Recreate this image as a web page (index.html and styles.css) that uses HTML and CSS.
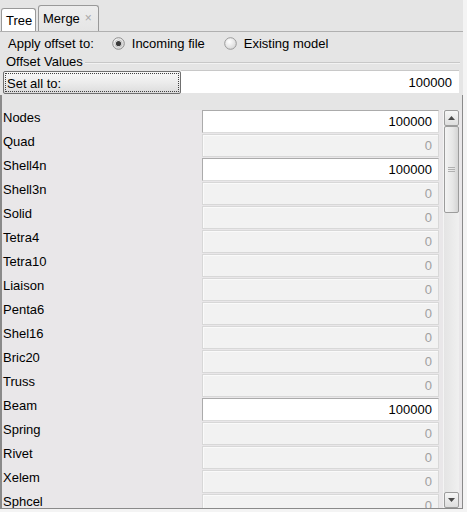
FILE: index.html
```html
<!DOCTYPE html>
<html>
<head>
<meta charset="utf-8">
<link rel="stylesheet" href="styles.css">
</head>
<body>
<div class="widget">
  <div class="tabs">
    <div class="tab tab-tree">Tree</div>
    <div class="tab tab-merge">Merge<span class="close">×</span></div>
  </div>
  <div class="panel">
    <div class="apply">
      <span class="apply-label">Apply offset to:</span>
      <span class="radio">
        <svg class="radio-icon" width="13" height="13" viewBox="0 0 13 13">
          <defs>
            <radialGradient id="rg1" cx="0.4" cy="0.35" r="0.7">
              <stop offset="0" stop-color="#ffffff"/>
              <stop offset="1" stop-color="#d6d6d6"/>
            </radialGradient>
          </defs>
          <circle cx="6.5" cy="6.5" r="5.8" fill="url(#rg1)" stroke="#8e8e8e" stroke-width="1"/>
          <circle cx="6.5" cy="6.5" r="2.6" fill="#3a3a3a"/>
          <circle cx="6.5" cy="6.5" r="3.6" fill="none" stroke="#b8b8b8" stroke-width="0.8"/>
        </svg>
        Incoming file
      </span>
      <span class="radio">
        <svg class="radio-icon" width="13" height="13" viewBox="0 0 13 13">
          <defs>
            <radialGradient id="rg2" cx="0.4" cy="0.35" r="0.7">
              <stop offset="0" stop-color="#ffffff"/>
              <stop offset="1" stop-color="#d6d6d6"/>
            </radialGradient>
          </defs>
          <circle cx="6.5" cy="6.5" r="5.8" fill="url(#rg2)" stroke="#9a9a9a" stroke-width="1"/>
        </svg>
        Existing model
      </span>
    </div>
    <div class="group-title"><span class="group-text">Offset Values</span><span class="group-line"></span></div>
    <div class="setall">
      <div class="btn"><span class="btn-inner">Set all to:</span></div>
      <div class="field">100000</div>
    </div>
    <div class="scroll">
      <div class="scroll-head"></div>
      <div class="scroll-body">
        <div class="rows">
          <div class="row"><span class="lbl">Nodes</span><span class="inp on">100000</span></div>
          <div class="row"><span class="lbl">Quad</span><span class="inp off">0</span></div>
          <div class="row"><span class="lbl">Shell4n</span><span class="inp on">100000</span></div>
          <div class="row"><span class="lbl">Shell3n</span><span class="inp off">0</span></div>
          <div class="row"><span class="lbl">Solid</span><span class="inp off">0</span></div>
          <div class="row"><span class="lbl">Tetra4</span><span class="inp off">0</span></div>
          <div class="row"><span class="lbl">Tetra10</span><span class="inp off">0</span></div>
          <div class="row"><span class="lbl">Liaison</span><span class="inp off">0</span></div>
          <div class="row"><span class="lbl">Penta6</span><span class="inp off">0</span></div>
          <div class="row"><span class="lbl">Shel16</span><span class="inp off">0</span></div>
          <div class="row"><span class="lbl">Bric20</span><span class="inp off">0</span></div>
          <div class="row"><span class="lbl">Truss</span><span class="inp off">0</span></div>
          <div class="row"><span class="lbl">Beam</span><span class="inp on">100000</span></div>
          <div class="row"><span class="lbl">Spring</span><span class="inp off">0</span></div>
          <div class="row"><span class="lbl">Rivet</span><span class="inp off">0</span></div>
          <div class="row"><span class="lbl">Xelem</span><span class="inp off">0</span></div>
          <div class="row"><span class="lbl">Sphcel</span><span class="inp off">0</span></div>
        </div>
        <div class="scrollbar">
          <div class="sb-btn">
            <svg width="7" height="4" viewBox="0 0 7 4"><path d="M0 4 L3.5 0 L7 4 Z" fill="#4a4a4a"/></svg>
          </div>
          <div class="sb-thumb">
            <svg width="7" height="6" viewBox="0 0 7 6"><path d="M0 0.5 H7 M0 2.5 H7 M0 4.5 H7" stroke="#b0b0b0" stroke-width="1"/></svg>
          </div>
          <div class="sb-track"></div>
          <div class="sb-btn">
            <svg width="7" height="4" viewBox="0 0 7 4"><path d="M0 0 L7 0 L3.5 4 Z" fill="#4a4a4a"/></svg>
          </div>
        </div>
      </div>
    </div>
  </div>
</div>
</body>
</html>
```

FILE: styles.css
```css
html, body {
  margin: 0;
  padding: 0;
  background: #f4f4f4;
}
body {
  font-family: "Liberation Sans", Arial, sans-serif;
  font-size: 13px;
  line-height: 15px;
  color: #000;
}
.widget {
  width: 463px;
  height: 509px;
  background: #e5e5e5;
  display: flex;
  flex-direction: column;
  overflow: hidden;
}
.tabs {
  height: 31px;
  display: flex;
  align-items: flex-end;
  gap: 2px;
  padding-left: 1px;
  flex: none;
}
.tab {
  border: 1px solid #999;
  border-bottom: none;
  border-radius: 3px 3px 0 0;
  box-sizing: border-box;
}
.tab-tree {
  width: 35px;
  height: 23px;
  background: #fff;
  padding: 4px 0 0 4px;
}
.tab-merge {
  width: 61px;
  height: 26px;
  background: linear-gradient(#ededed, #e5e5e5);
  padding: 5px 0 0 4px;
  display: flex;
  align-items: flex-start;
}
.close {
  color: #a8a8a8;
  font-size: 12px;
  margin-left: 5px;
  line-height: 15px;
}
.panel {
  flex: 1;
  border-top: 1px solid #b0b0b0;
  display: flex;
  flex-direction: column;
  min-height: 0;
}
.apply {
  display: flex;
  align-items: center;
  padding: 4px 0 0 8px;
  height: 15px;
}
.apply-label {
  margin-right: 18px;
}
.radio {
  display: flex;
  align-items: center;
  gap: 7px;
  margin-right: 19px;
}
.radio-icon {
  display: block;
}
.group-title {
  display: flex;
  align-items: center;
  margin-top: 3px;
  padding-left: 6px;
  padding-right: 3px;
  height: 15px;
}
.group-line {
  flex: 1;
  height: 0;
  border-top: 1px solid #c8c8c8;
  border-bottom: 1px solid #f2f2f2;
  margin-left: 2px;
  margin-top: 2px;
}
.setall {
  display: flex;
  margin-top: 1px;
  padding-left: 3px;
  padding-right: 4px;
  height: 24px;
}
.btn {
  width: 178px;
  height: 23px;
  margin-top: 1px;
  box-sizing: border-box;
  border: 1px solid #707070;
  border-radius: 2px;
  background: linear-gradient(#f8f8f8 0%, #ececec 50%, #dcdcdc 100%);
  padding: 1px;
}
.btn-inner {
  display: block;
  height: 100%;
  box-sizing: border-box;
  border: 1px dotted #404040;
  padding: 2px 0 0 1px;
}
.field {
  flex: 1;
  height: 23px;
  box-sizing: border-box;
  background: #fff;
  border-top: 1px solid #c8c8c8;
  text-align: right;
  padding: 4px 7px 0 0;
}
.scroll {
  flex: 1;
  min-height: 0;
  margin-top: 1px;
  border-left: 2px solid #8a8a8a;
  border-right: 1px solid #8a8a8a;
  border-bottom: 1px solid #8a8a8a;
  display: flex;
  flex-direction: column;
  overflow: hidden;
}
.scroll-head {
  height: 15px;
  flex: none;
}
.scroll-body {
  flex: 1;
  min-height: 0;
  display: flex;
  background: #e9e7e9;
  padding-right: 3px;
  overflow: hidden;
}
.rows {
  flex: 1;
  display: flex;
  flex-direction: column;
}
.row {
  display: flex;
  height: 23px;
  margin-bottom: 1px;
  flex: none;
}
.lbl {
  padding-left: 1px;
  flex: 1;
}
.inp {
  width: 237px;
  height: 23px;
  box-sizing: border-box;
  text-align: right;
  padding-right: 6px;
  line-height: 21px;
  margin-right: 4px;
}
.inp.on {
  background: #fff;
  border: 1px solid #ababab;
  border-right-color: #dcdcdc;
  border-bottom-color: #dcdcdc;
  color: #000;
}
.inp.off {
  background: #f2f2f2;
  border: 1px solid #d8d8d8;
  box-shadow: inset 1px 1px 0 #fafafa;
  color: #a0a0a0;
}
.scrollbar {
  width: 15px;
  display: flex;
  flex-direction: column;
  background: linear-gradient(90deg, #e4e4e4, #f0f0f0);
  border-left: 1px solid #f4f4f4;
}
.sb-btn {
  height: 16px;
  box-sizing: border-box;
  border: 1px solid #9c9c9c;
  border-radius: 2px;
  background: linear-gradient(#f6f6f6, #dedede);
  display: flex;
  align-items: center;
  justify-content: center;
  flex: none;
}
.sb-thumb {
  height: 87px;
  box-sizing: border-box;
  border: 1px solid #9c9c9c;
  border-radius: 2px;
  background: linear-gradient(90deg, #f4f4f4, #e6e6e6 60%, #d4d4d4);
  display: flex;
  align-items: center;
  justify-content: center;
  flex: none;
}
.sb-thumb svg, .sb-btn svg {
  display: block;
}
.sb-track {
  flex: 1;
}
```
